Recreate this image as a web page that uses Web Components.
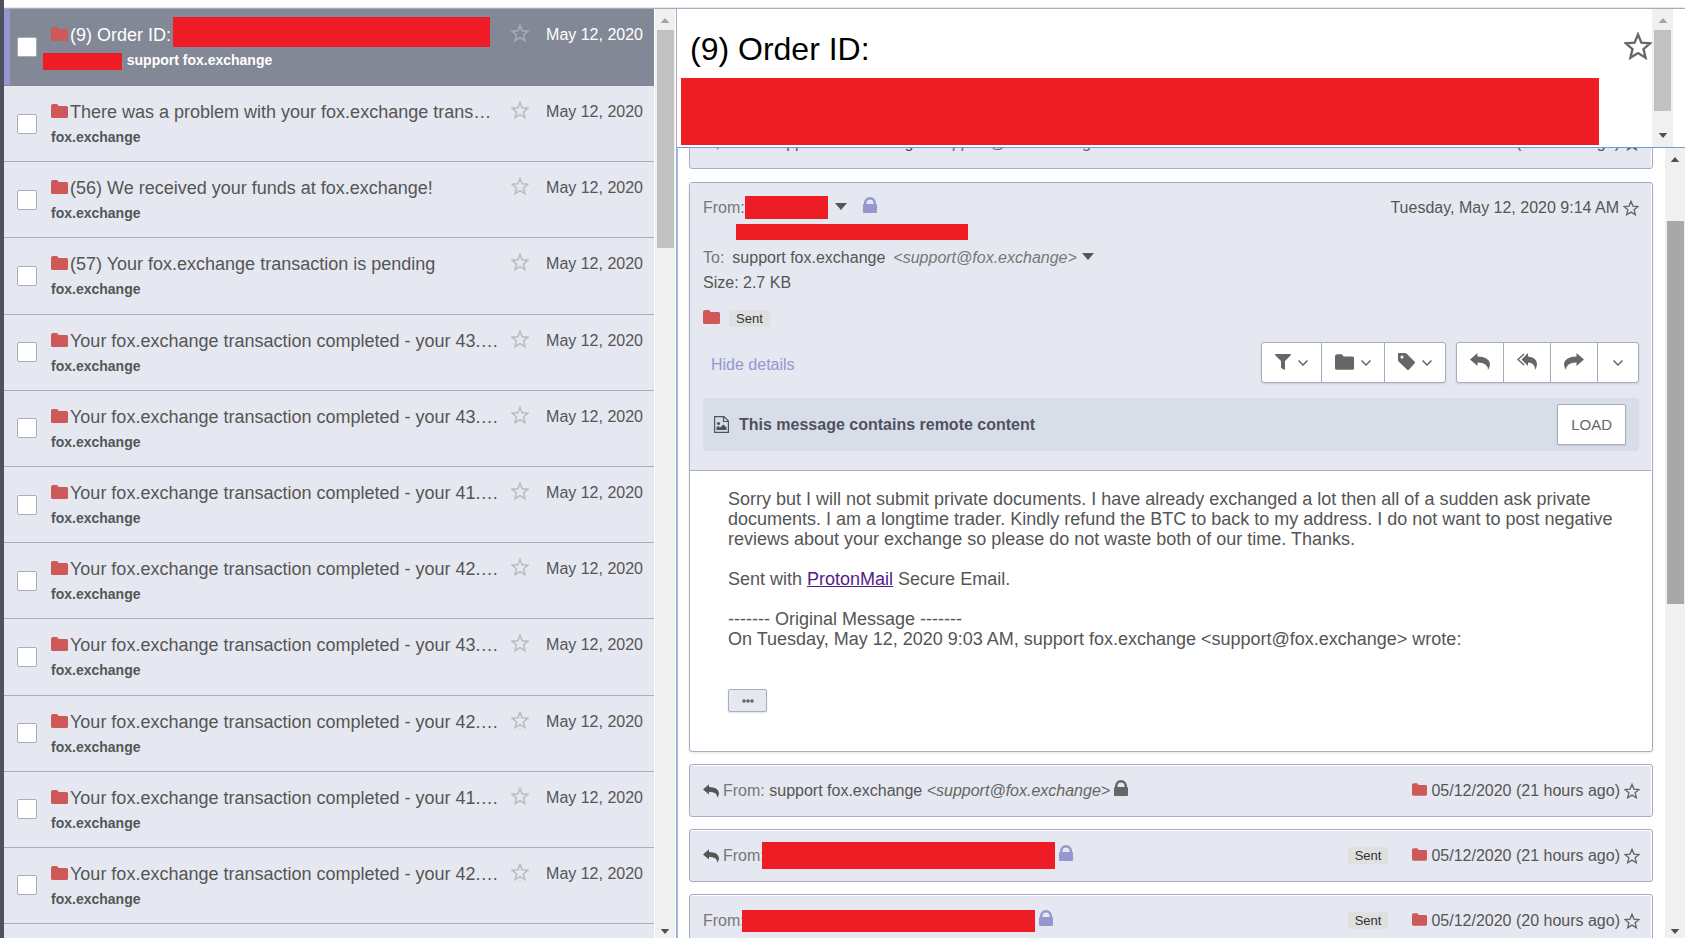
<!DOCTYPE html>
<html lang="en">
<head>
<meta charset="utf-8">
<title>Inbox</title>
<style>
    html, body {
        margin: 0;
        height: 100%;
    }

    body {
        --line: #a8acbe;
        --panel: #e5e8f0;
        --accent: #9597ce;
        --text: #555;
        --muted: #777;
        --folder: #cf5858;
        font-family: "Liberation Sans", Arial, sans-serif;
        font-size: 16px;
        color: var(--text);
        background: #fff;
        overflow: hidden;
    }
</style>
</head>
<body>
<mail-app></mail-app>

<script>
// Icon shapes: [viewBox, markup]
const ICONS = {
    star: ['0 0 24 24', '<path fill="none" stroke="currentColor" stroke-width="2" d="M12 2l2.900 7.100 7.600.6-5.800 5 1.800 7.400-6.500-4-6.500 4 1.800-7.400-5.800-5 7.600-.6z"/>'],
    folder: ['0 0 17 14', '<path d="M2 0h3.500q1 0 1.500 1l.5 1h8q1.500 0 1.500 1.500v9q0 1.500-1.500 1.500h-14q-1.500 0-1.500-1.500v-10.500q0-2 2-2z"/>'],
    lock: ['0 0 14 16', '<path d="M1 7V6a6 6 0 0 1 12 0v1q1 0 1 1v7q0 1-1 1H1q-1 0-1-1V8q0-1 1-1zm2.500 0h7V6a3.500 3.500 0 0 0-7 0z"/>'],
    caret: ['0 0 12 7', '<path d="M0 0h12L6 7z"/>'],
    chevron: ['0 0 10 6', '<path fill="none" stroke="currentColor" stroke-width="1.500" d="M.5.5L5 5 9.500.5"/>'],
    filter: ['0 0 16 16', '<path d="M0 0h16q0 1-1 2l-5 5v9l-4-2V7L1 2Q0 1 0 0z"/>'],
    tag: ['0 0 17 17', '<path fill-rule="evenodd" d="M1 0h6q1 0 2 1l7.500 7.500q1 1 0 2l-5.500 6q-1 1-2 0L1 9Q0 8 0 7V1q0-1 1-1zm3 2.500a1.500 1.500 0 1 0 0 3 1.500 1.500 0 0 0 0-3z"/>'],
    reply: ['0 0 20 17', '<path d="M0 6.500L7.500 0v3.500Q19 3.500 20 11q0 3-2 6 0-7.500-10.500-7.500V13z"/>'],
    replyall: ['0 0 20 17', '<path d="M4.500 6.500L11 0v3.500q8.500.5 9 7.500 0 3-2 6 0-7.500-7-7.500V13z"/><path fill="none" stroke="currentColor" stroke-width="1.500" d="M7 1L1 6.500 7 12"/>'],
    forward: ['0 0 20 17', '<path d="M20 6.500L12.500 0v3.500Q1 3.500 0 11q0 3 2 6 0-7.500 10.500-7.500V13z"/>'],
    image: ['0 0 15 17', '<path fill="none" stroke="currentColor" stroke-width="1.200" d="M.6.6h9.400l4.400 4.400v11.400H.6zM9.500.6V5.500h5"/><circle cx="4.500" cy="7.500" r="1.600"/><path d="M2.500 14v-3l2-1 1.500 1.500 3.500-3 3 3V14z"/>'],
    dots: ['0 0 12 4', '<circle cx="2" cy="2" r="1.800"/><circle cx="6" cy="2" r="1.800"/><circle cx="10" cy="2" r="1.800"/>']
};

/** Base class: opens the shadow root and fills it once */
class MailElement extends HTMLElement {
    constructor() {
        super();
        this.attachShadow({ mode: 'open' });
    }

    connectedCallback() {
        this.shadowRoot.innerHTML = this.template();
    }
}

class MailIcon extends MailElement {
    template() {
        const [box, shape] = ICONS[this.getAttribute('name')];
        return `
            <style>
                :host { display: block; flex: none; width: 16px; height: 16px; }
                svg { display: block; width: 100%; height: 100%; fill: currentColor; }
            </style>
            <svg viewBox="${box}" aria-hidden="true">${shape}</svg>
        `;
    }
}

// Solid block drawn over private data, sized by its user
class RedactedBlock extends MailElement {
    template() {
        return `
            <style>
                :host { display: block; flex: none; position: relative; background: #ee1c24; }
            </style>
        `;
    }
}

class ScrollTrack extends MailElement {
    template() {
        return `
            <style>
                :host {
                    display: flex;
                    flex-direction: column;
                    align-items: center;
                    flex: none;
                    width: 20px;
                    background: #f0f0f0;
                    color: #505050;
                }
                :host([at-top]) .up { color: #a3a3a3; }
                mail-icon { width: 10px; height: 5px; }
                .up { margin: 9px 0 7px; transform: rotate(180deg); }
                .thumb {
                    flex: none;
                    width: 17px;
                    height: var(--thumb-size);
                    margin-top: var(--thumb-start, 0px);
                    background: var(--thumb-color, #c1c1c1);
                }
                .space { flex: 1; }
                .down { margin-bottom: var(--track-end, 4px); }
            </style>
            <mail-icon class="up" name="caret"></mail-icon>
            <div class="thumb"></div>
            <div class="space"></div>
            <mail-icon class="down" name="caret"></mail-icon>
        `;
    }
}

class StarButton extends MailElement {
    template() {
        return `
            <style>
                :host { display: block; flex: none; width: 16px; height: 16px; color: #666; }
                button { display: block; width: 100%; height: 100%; border: 0; padding: 0; background: none; color: inherit; }
                mail-icon { width: 100%; height: 100%; }
            </style>
            <button type="button" aria-label="Star"><mail-icon name="star"></mail-icon></button>
        `;
    }
}

// One conversation of the list
class MailRow extends MailElement {
    template() {
        return `
            <style>
                :host {
                    display: flex;
                    flex: 1;
                    box-sizing: border-box;
                    border-bottom: 1px solid var(--line);
                    background: var(--panel);
                }
                :host([selected]) {
                    flex: 0 0 77px;
                    border-color: #838896;
                    background: linear-gradient(to right, var(--accent) 6px, #838896 6px);
                    color: #fff;
                }
                input {
                    appearance: none;
                    align-self: center;
                    flex: none;
                    width: 20px;
                    height: 20px;
                    margin: 0 14px 0 13px;
                    border: 1px solid var(--line);
                    border-radius: 2px;
                    background: #fff;
                }
                .main { flex: 1; min-width: 0; padding-top: 14px; }
                .subject {
                    display: flex;
                    align-items: center;
                    gap: 2px;
                    height: 24px;
                    margin-bottom: 3px;
                    font-size: 18px;
                    line-height: 24px;
                    white-space: nowrap;
                }
                .folder { width: 17px; height: 14px; margin-bottom: 2px; color: var(--folder); }
                .subject redacted-block { width: 317px; height: 30px; margin-bottom: 6px; }
                .sender { display: flex; height: 20px; font-size: 14px; font-weight: bold; line-height: 20px; }
                .sender redacted-block { width: 79px; height: 17px; margin: 3px -3px 0 -8px; }
                star-button { width: 18px; height: 18px; margin: 15px 17px 0 0; color: #bbb; }
                :host([selected]) star-button { color: #a9adb8; }
                time { padding: 14px 11px 0 0; line-height: 24px; white-space: nowrap; }
            </style>
            <input type="checkbox" aria-label="Select conversation">
            <div class="main">
                <div class="subject">
                    <mail-icon class="folder" name="folder"></mail-icon>
                    <slot></slot>
                    ${this.hasAttribute('selected') ? '<redacted-block></redacted-block>' : ''}
                </div>
                <div class="sender">
                    ${this.hasAttribute('selected') ? '<redacted-block></redacted-block>' : ''}
                    <slot name="sender"></slot>
                </div>
            </div>
            <star-button></star-button>
            <time>May 12, 2020</time>
        `;
    }
}

class MailList extends MailElement {
    template() {
        const subjects = [
            'There was a problem with your fox.exchange trans…',
            '(56) We received your funds at fox.exchange!',
            '(57) Your fox.exchange transaction is pending',
            ...['43', '43', '41', '42', '43', '42', '41', '42'].map(
                n => `Your fox.exchange transaction completed - your ${n}.…`)
        ];
        return `
            <style>
                :host { display: flex; height: 100%; overflow: hidden; }
                .rows { display: flex; flex-direction: column; flex: 1; min-width: 0; }
                .rest { flex: 0 0 14px; background: var(--panel); }
                scroll-track { margin: 0 1px; --thumb-size: 218px; }
            </style>
            <div class="rows">
                <mail-row selected>(9) Order ID:<span slot="sender">, support fox.exchange</span></mail-row>
                ${subjects.map(s => `<mail-row>${s}<span slot="sender">fox.exchange</span></mail-row>`).join('')}
                <div class="rest"></div>
            </div>
            <scroll-track at-top></scroll-track>
        `;
    }
}

class SentLabel extends MailElement {
    template() {
        return `
            <style>
                :host {
                    display: block;
                    padding: 0 7px;
                    border-radius: 2px;
                    background: #e0e0e0;
                    color: #333;
                    font-size: 13px;
                    line-height: 17px;
                }
            </style>
            Sent
        `;
    }
}

// Collapsed message of the thread
class MessageSummary extends MailElement {
    template() {
        const has = name => this.hasAttribute(name);
        return `
            <style>
                :host {
                    display: flex;
                    align-items: center;
                    height: 51px;
                    padding: 0 12px 0 13px;
                    border: 1px solid var(--line);
                    border-radius: 3px;
                    background: var(--panel);
                    box-shadow: inset -1px 1px 0 #fff;
                    white-space: nowrap;
                }
                .reply { width: 16px; height: 14px; margin-right: 4px; }
                .label { color: var(--muted); }
                .lock { width: 14px; height: 16px; margin: 0 0 6px 4px; color: #666; }
                .private { color: var(--accent); }
                .space { flex: 1; }
                sent-label { margin-right: 24px; }
                .folder { width: 15px; height: 13px; margin: 0 4px 2px 0; color: var(--folder); }
                star-button { margin-left: 4px; }
            </style>
            ${has('replied') ? '<mail-icon class="reply" name="reply"></mail-icon>' : ''}
            <span class="label">From:</span>
            <slot></slot>
            <mail-icon class="lock ${has('private') ? 'private' : ''}" name="lock"></mail-icon>
            <div class="space"></div>
            ${has('sent') ? '<sent-label></sent-label>' : ''}
            <mail-icon class="folder" name="folder"></mail-icon>
            <time>${this.getAttribute('date')}</time>
            <star-button></star-button>
        `;
    }
}

class MessageToolbar extends MailElement {
    template() {
        return `
            <style>
                :host { display: flex; gap: 10px; }
                .group {
                    display: flex;
                    border: 1px solid var(--line);
                    border-radius: 3px;
                    background: #fff;
                    box-shadow: 0 1px 2px rgba(0, 0, 0, 0.12);
                }
                button {
                    display: flex;
                    align-items: center;
                    justify-content: center;
                    gap: 7px;
                    height: 39px;
                    padding: 0 13px;
                    border: 0;
                    border-right: 1px solid var(--line);
                    background: none;
                    color: #666;
                }
                button:last-child { border-right: 0; }
                mail-icon { height: 16px; margin-bottom: 2px; }
                .folder { width: 19px; }
                .tag { width: 17px; height: 17px; }
                .arrow { width: 20px; height: 17px; }
                .chevron { width: 10px; height: 6px; margin-bottom: 0; }
                .more { padding: 0 15px; }
            </style>
            <div class="group">
                <button type="button" aria-label="Filter"><mail-icon name="filter"></mail-icon><mail-icon class="chevron" name="chevron"></mail-icon></button>
                <button type="button" aria-label="Move to"><mail-icon class="folder" name="folder"></mail-icon><mail-icon class="chevron" name="chevron"></mail-icon></button>
                <button type="button" aria-label="Label as"><mail-icon class="tag" name="tag"></mail-icon><mail-icon class="chevron" name="chevron"></mail-icon></button>
            </div>
            <div class="group">
                <button type="button" aria-label="Reply"><mail-icon class="arrow" name="reply"></mail-icon></button>
                <button type="button" aria-label="Reply all"><mail-icon class="arrow" name="replyall"></mail-icon></button>
                <button type="button" aria-label="Forward"><mail-icon class="arrow" name="forward"></mail-icon></button>
                <button type="button" class="more" aria-label="More"><mail-icon class="chevron" name="chevron"></mail-icon></button>
            </div>
        `;
    }
}

// Opened message: details, notice and body
class MessageDetail extends MailElement {
    template() {
        return `
            <style>
                :host {
                    display: block;
                    border: 1px solid var(--line);
                    border-radius: 3px;
                    background: #fff;
                    box-shadow: 0 1px 3px rgba(0, 0, 0, 0.1);
                }
                header {
                    margin-right: 1px;
                    padding: 12px 12px 19px 13px;
                    border-bottom: 1px solid var(--line);
                    background: var(--panel);
                }
                .line { display: flex; align-items: center; height: 25px; line-height: 25px; white-space: nowrap; }
                .label { color: var(--muted); }
                .space { flex: 1; }
                .name { width: 83px; height: 23px; }
                .address { width: 232px; height: 16px; margin: 0 0 1px 33px; }
                .caret { width: 12px; height: 7px; margin: 0 0 3px 5px; }
                .name + .caret { margin-left: 7px; }
                .lock { width: 14px; height: 16px; margin: 0 0 6px 16px; color: var(--accent); }
                .to { margin: 0 8px; }
                star-button { margin-left: 4px; }
                .tags { margin: 11px 0; gap: 9px; }
                .folder { width: 17px; height: 14px; margin-bottom: 4px; color: var(--folder); }
                .actions { display: flex; align-items: flex-end; justify-content: space-between; }
                .actions a { padding-left: 8px; color: var(--accent); line-height: 37px; text-decoration: none; }
                .notice {
                    display: flex;
                    align-items: center;
                    gap: 10px;
                    margin-top: 15px;
                    padding: 6px 13px 6px 11px;
                    border-radius: 2px;
                    background: #d8dee8;
                    color: #505061;
                    font-weight: bold;
                }
                .notice mail-icon { width: 15px; height: 17px; }
                .load {
                    height: 41px;
                    padding: 0 13px;
                    border: 1px solid var(--line);
                    border-radius: 2px;
                    background: #fff;
                    box-shadow: 0 1px 2px rgba(0, 0, 0, 0.12);
                    color: #666;
                    font: inherit;
                    font-size: 15px;
                    font-weight: normal;
                }
                .body { padding: 18px 20px 39px 38px; font-size: 18px; line-height: 20px; }
                .body p { margin: 0 0 20px; }
                .body a { color: #551a8b; }
                .more {
                    display: flex;
                    align-items: center;
                    justify-content: center;
                    width: 39px;
                    height: 23px;
                    margin-top: 40px;
                    padding: 0;
                    border: 1px solid var(--line);
                    border-radius: 2px;
                    background: var(--panel);
                    box-shadow: 0 1px 2px rgba(0, 0, 0, 0.12);
                    color: #666;
                }
                .more mail-icon { width: 12px; height: 4px; }
            </style>
            <header>
                <div class="line">
                    <span class="label">From:</span>
                    <redacted-block class="name"></redacted-block>
                    <mail-icon class="caret" name="caret"></mail-icon>
                    <mail-icon class="lock" name="lock"></mail-icon>
                    <div class="space"></div>
                    <time>Tuesday, May 12, 2020 9:14 AM</time>
                    <star-button></star-button>
                </div>
                <div class="line"><redacted-block class="address"></redacted-block></div>
                <div class="line">
                    <span class="label">To:</span>
                    <span class="to">support fox.exchange</span>
                    <em class="label">&lt;support@fox.exchange&gt;</em>
                    <mail-icon class="caret" name="caret"></mail-icon>
                </div>
                <div class="line">Size: 2.7 KB</div>
                <div class="line tags">
                    <mail-icon class="folder" name="folder"></mail-icon>
                    <sent-label></sent-label>
                </div>
                <div class="actions">
                    <a href="#">Hide details</a>
                    <message-toolbar></message-toolbar>
                </div>
                <div class="notice">
                    <mail-icon name="image"></mail-icon>
                    <span>This message contains remote content</span>
                    <div class="space"></div>
                    <button type="button" class="load">LOAD</button>
                </div>
            </header>
            <div class="body">
                <p>Sorry but I will not submit private documents. I have already exchanged a lot then all of a sudden ask private<br>
                documents. I am a longtime trader. Kindly refund the BTC to back to my address. I do not want to post negative<br>
                reviews about your exchange so please do not waste both of our time. Thanks.</p>
                <p>Sent with <a href="#">ProtonMail</a> Secure Email.</p>
                <p>------- Original Message -------<br>
                On Tuesday, May 12, 2020 9:03 AM, support fox.exchange &lt;support@fox.exchange&gt; wrote:</p>
                <button type="button" class="more" aria-label="Show original message"><mail-icon name="dots"></mail-icon></button>
            </div>
        `;
    }
}

class MessageThread extends MailElement {
    template() {
        const support = '<span>&nbsp;support fox.exchange <em>&lt;support@fox.exchange&gt;</em></span>';
        return `
            <style>
                :host { display: flex; flex-direction: column; height: 100%; min-width: 0; border-left: 1px solid var(--line); box-sizing: border-box; }
                .heading { display: flex; flex: none; height: 138px; padding-right: 12px; }
                .title { flex: 1; min-width: 0; padding: 22px 0 0 4px; }
                h1 { margin: 0 0 11px 9px; font-size: 32px; font-weight: normal; line-height: 36px; color: #000; }
                .title redacted-block { height: 67px; margin-right: 25px; }
                .heading star-button { width: 28px; height: 28px; margin-top: 23px; }
                .heading scroll-track { width: 21px; --thumb-size: 81px; --track-end: 9px; }
                .thread {
                    display: flex;
                    flex: 1;
                    min-height: 0;
                    border-top: 1px solid #6f9be0;
                    border-left: 1px solid #99bbf5;
                    overflow: hidden;
                }
                .messages { flex: 1; min-width: 0; padding: 0 12px 0 11px; }
                /* the thread is scrolled a little way down its first message */
                .messages > :first-child { margin: -32px 0 13px; }
                message-detail, message-summary { margin-bottom: 12px; }
                .thread > scroll-track { --thumb-start: 52px; --thumb-size: 383px; --thumb-color: #a8a8a8; }
                em { color: #666; }
                .wide { width: 293px; height: 27px; margin-left: -3px; }
                .thin { width: 293px; height: 22px; margin-left: -3px; }
            </style>
            <div class="heading">
                <div class="title">
                    <h1>(9) Order ID:</h1>
                    <redacted-block></redacted-block>
                </div>
                <star-button></star-button>
                <scroll-track at-top></scroll-track>
            </div>
            <div class="thread">
                <div class="messages">
                    <message-summary replied date="05/12/2020 (21 hours ago)">${support}</message-summary>
                    <message-detail></message-detail>
                    <message-summary replied date="05/12/2020 (21 hours ago)">${support}</message-summary>
                    <message-summary replied private sent date="05/12/2020 (21 hours ago)"><redacted-block class="wide"></redacted-block></message-summary>
                    <message-summary private sent date="05/12/2020 (20 hours ago)"><redacted-block class="thin"></redacted-block></message-summary>
                </div>
                <scroll-track></scroll-track>
            </div>
        `;
    }
}

class MailApp extends MailElement {
    template() {
        return `
            <style>
                :host {
                    display: grid;
                    grid-template-columns: 4px 672px minmax(0, 1fr);
                    grid-template-rows: 9px minmax(0, 1fr);
                    height: 100vh;
                }
                .rail { grid-row: 1 / 3; background: #505061; }
                .top { grid-column: 2 / 4; border-bottom: 1px solid var(--line); box-shadow: inset 0 -1px 0 #e5e8f0; }
            </style>
            <div class="rail"></div>
            <div class="top"></div>
            <mail-list></mail-list>
            <message-thread></message-thread>
        `;
    }
}

customElements.define('mail-icon', MailIcon);
customElements.define('redacted-block', RedactedBlock);
customElements.define('scroll-track', ScrollTrack);
customElements.define('star-button', StarButton);
customElements.define('mail-row', MailRow);
customElements.define('mail-list', MailList);
customElements.define('sent-label', SentLabel);
customElements.define('message-summary', MessageSummary);
customElements.define('message-toolbar', MessageToolbar);
customElements.define('message-detail', MessageDetail);
customElements.define('message-thread', MessageThread);
customElements.define('mail-app', MailApp);
</script>
</body>
</html>
